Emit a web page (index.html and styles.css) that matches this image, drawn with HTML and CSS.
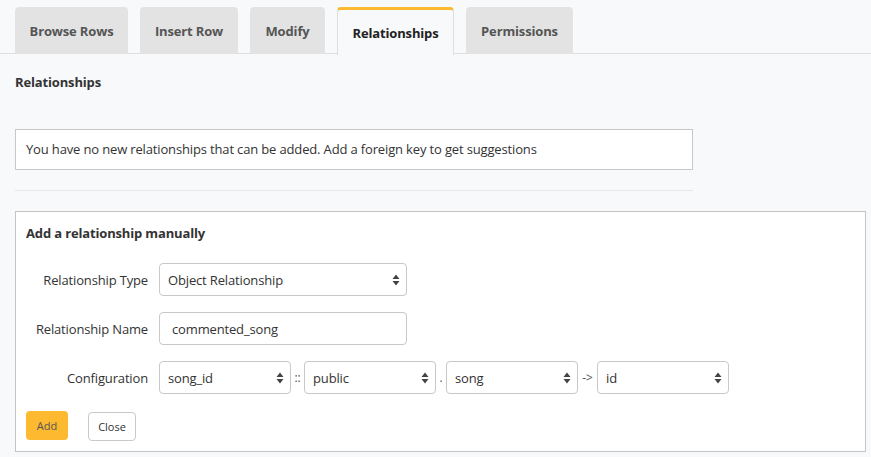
FILE: index.html
```html
<!DOCTYPE html>
<html>
<head>
<meta charset="utf-8">
<link rel="stylesheet" href="styles.css">
</head>
<body>
<div class="tabs">
  <div class="tab">Browse Rows</div>
  <div class="tab">Insert Row</div>
  <div class="tab">Modify</div>
  <div class="tab active">Relationships</div>
  <div class="tab">Permissions</div>
</div>
<div class="content">
  <h4 class="heading">Relationships</h4>
  <div class="message">You have no new relationships that can be added. Add a foreign key to get suggestions</div>
  <hr class="divider">
  <div class="panel">
    <div class="panel-title">Add a relationship manually</div>
    <div class="form">
      <div class="label">Relationship Type</div>
      <div class="field">
        <div class="select wide"><span>Object Relationship</span><svg class="arrow" width="8" height="12" viewBox="0 0 8 12"><path d="M4 0.5L7.5 5H0.5Z M4 11.5L0.5 7H7.5Z" fill="#444"/></svg></div>
      </div>
      <div class="label">Relationship Name</div>
      <div class="field">
        <div class="input wide">commented_song</div>
      </div>
      <div class="label">Configuration</div>
      <div class="field">
        <div class="select small"><span>song_id</span><svg class="arrow" width="8" height="12" viewBox="0 0 8 12"><path d="M4 0.5L7.5 5H0.5Z M4 11.5L0.5 7H7.5Z" fill="#444"/></svg></div>
        <span class="sep">::</span>
        <div class="select small"><span>public</span><svg class="arrow" width="8" height="12" viewBox="0 0 8 12"><path d="M4 0.5L7.5 5H0.5Z M4 11.5L0.5 7H7.5Z" fill="#444"/></svg></div>
        <span class="sep dot">.</span>
        <div class="select small"><span>song</span><svg class="arrow" width="8" height="12" viewBox="0 0 8 12"><path d="M4 0.5L7.5 5H0.5Z M4 11.5L0.5 7H7.5Z" fill="#444"/></svg></div>
        <span class="sep arrowsep">-&gt;</span>
        <div class="select small"><span>id</span><svg class="arrow" width="8" height="12" viewBox="0 0 8 12"><path d="M4 0.5L7.5 5H0.5Z M4 11.5L0.5 7H7.5Z" fill="#444"/></svg></div>
      </div>
    </div>
    <div class="buttons">
      <button class="btn add">Add</button>
      <button class="btn close">Close</button>
    </div>
  </div>
</div>
</body>
</html>
```

FILE: styles.css
```css
* { box-sizing: border-box; }
html, body { margin: 0; padding: 0; }
body {
  background: #f8f9fb;
  font-family: "Open Sans", "Noto Sans", sans-serif;
  color: #333;
  font-size: 13px;
  letter-spacing: -0.15px;
  width: 871px;
  height: 457px;
  overflow: hidden;
}
.tabs {
  display: flex;
  gap: 12px;
  padding: 7px 0 0 15px;
  border-bottom: 1px solid #dedede;
  height: 54px;
}
.tab {
  height: 47px;
  margin-bottom: -1px;
  padding: 1px 0 0 0;
  background: #e3e3e3;
  border-radius: 4px 4px 0 0;
  font-weight: 700;
  font-size: 13px;
  color: #555;
  white-space: nowrap;
  display: flex;
  align-items: center;
  justify-content: center;
}
.tab:nth-child(1) { width: 113px; }
.tab:nth-child(2) { width: 98px; }
.tab:nth-child(3) { width: 75px; }
.tab:nth-child(4) { width: 117px; }
.tab:nth-child(5) { width: 107px; }
.tab.active {
  background: #f8f9fb;
  border: 1px solid #dedede;
  border-bottom: none;
  border-top: 3px solid #fdb92f;
  color: #222;
  height: 48px;
  padding-top: 0;
}
.content {
  padding: 0 6px 0 15px;
}
.heading {
  margin: 0;
  padding-top: 19px;
  font-size: 13px;
  font-weight: 700;
  line-height: 18px;
  color: #333;
}
.message {
  margin-top: 38px;
  width: 678px;
  height: 41px;
  background: #fff;
  border: 1px solid #c8c8c8;
  padding: 0 10px 1px 10px;
  display: flex;
  align-items: center;
  font-size: 13px;
  color: #333;
}
.divider {
  margin: 20px 0 0 0;
  width: 678px;
  border: none;
  border-top: 1px solid #e6e7e9;
  height: 0;
}
.panel {
  margin-top: 20px;
  width: 851px;
  height: 241px;
  background: #fff;
  border: 1px solid #c4c4c4;
  padding: 12px 10px 10px 10px;
}
.panel-title {
  font-weight: 700;
  font-size: 13px;
  line-height: 18px;
  color: #333;
}
.form {
  margin-top: 21px;
  display: grid;
  grid-template-columns: 122px auto;
  column-gap: 11px;
  row-gap: 16px;
  align-items: center;
}
.label {
  text-align: right;
  font-size: 13px;
  color: #333;
}
.field {
  display: flex;
  align-items: center;
}
.select, .input {
  height: 33px;
  border: 1px solid #c8c8c8;
  border-radius: 4px;
  background: #fff;
  display: flex;
  align-items: center;
  font-size: 13px;
  color: #333;
}
.select {
  justify-content: space-between;
  padding: 0 6px 0 8px;
}
.input { padding-left: 12px; }
.wide { width: 248px; }
.small { width: 132px; }
.arrow { display: block; }
.sep {
  font-size: 12px;
  color: #555;
  text-align: center;
  width: 13px;
}
.sep.dot { width: 10px; }
.sep.arrowsep { width: 19px; }
.buttons {
  margin-top: 16px;
  display: flex;
  align-items: center;
  gap: 20px;
}
.btn {
  font-family: "Open Sans", "Noto Sans", sans-serif;
  font-size: 11px;
  border-radius: 4px;
  height: 29px;
  padding: 0;
  cursor: pointer;
}
.btn.add {
  width: 42px;
  background: #fdb92f;
  border: none;
  color: #555;
}
.btn.close {
  width: 48px;
  background: #fff;
  border: 1px solid #c8c8c8;
  color: #333;
  margin-top: 2px;
}
```
